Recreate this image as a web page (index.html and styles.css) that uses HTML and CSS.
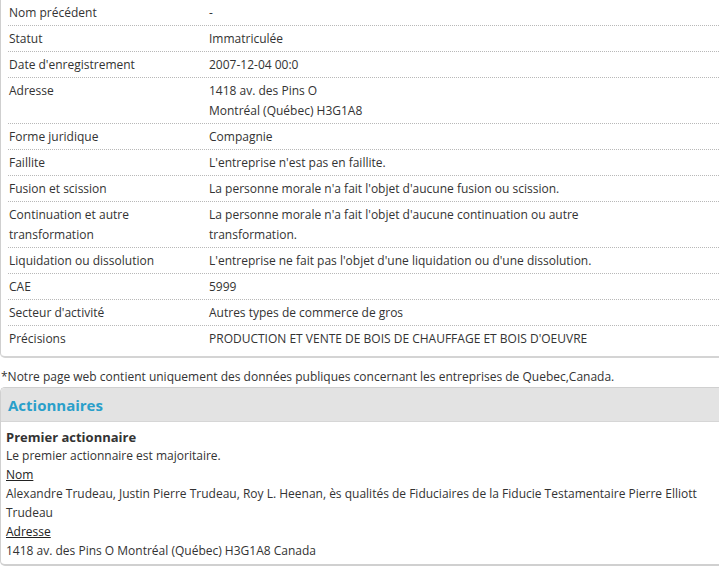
FILE: index.html
```html
<!DOCTYPE html>
<html lang="fr">
<head>
<meta charset="utf-8">
<title>Fiche entreprise</title>
<link rel="stylesheet" href="styles.css">
</head>
<body>
<div class="panel">
  <div class="row"><div class="label">Nom précédent</div><div class="value">-</div></div>
  <div class="row"><div class="label">Statut</div><div class="value">Immatriculée</div></div>
  <div class="row"><div class="label">Date d'enregistrement</div><div class="value">2007-12-04 00:0</div></div>
  <div class="row"><div class="label">Adresse</div><div class="value">1418 av. des Pins O<br>Montréal (Québec) H3G1A8</div></div>
  <div class="row"><div class="label">Forme juridique</div><div class="value">Compagnie</div></div>
  <div class="row"><div class="label">Faillite</div><div class="value">L'entreprise n'est pas en faillite.</div></div>
  <div class="row"><div class="label">Fusion et scission</div><div class="value">La personne morale n'a fait l'objet d'aucune fusion ou scission.</div></div>
  <div class="row"><div class="label">Continuation et autre transformation</div><div class="value">La personne morale n'a fait l'objet d'aucune continuation ou autre<br>transformation.</div></div>
  <div class="row"><div class="label">Liquidation ou dissolution</div><div class="value">L'entreprise ne fait pas l'objet d'une liquidation ou d'une dissolution.</div></div>
  <div class="row"><div class="label">CAE</div><div class="value">5999</div></div>
  <div class="row"><div class="label">Secteur d'activité</div><div class="value">Autres types de commerce de gros</div></div>
  <div class="row last"><div class="label">Précisions</div><div class="value">PRODUCTION ET VENTE DE BOIS DE CHAUFFAGE ET BOIS D'OEUVRE</div></div>
</div>
<p class="note">*Notre page web contient uniquement des données publiques concernant les entreprises de Quebec,Canada.</p>
<div class="box">
  <div class="box-head"><h2 class="box-title">Actionnaires</h2></div>
  <div class="box-body">
    <h3 class="sub">Premier actionnaire</h3>
    <p class="line">Le premier actionnaire est majoritaire.</p>
    <p class="line field">Nom</p>
    <p class="line">Alexandre Trudeau, Justin Pierre Trudeau, Roy L. Heenan, ès qualités de Fiduciaires de la Fiducie Testamentaire Pierre Elliott Trudeau</p>
    <p class="line field">Adresse</p>
    <p class="line">1418 av. des Pins O Montréal (Québec) H3G1A8 Canada</p>
  </div>
</div>
</body>
</html>
```
FILE: styles.css
```css
html, body {
  margin: 0;
  padding: 0;
  background: #fff;
  overflow: hidden;
}
body {
  font-family: "Open Sans", "DejaVu Sans", sans-serif;
  font-size: 12px;
  color: #333;
}
.panel {
  border-left: 1px solid #cfcfcf;
  border-bottom: 2px solid #d4d4d4;
  border-bottom-left-radius: 5px;
  padding: 0 0 5px 7px;
}
.row {
  display: flex;
  border-bottom: 1px dotted #b8b8b8;
  padding: 3px 0 2px;
  line-height: 20px;
}
.row.last {
  border-bottom: none;
}
.label {
  width: 200px;
  padding-left: 1px;
  flex-shrink: 0;
  padding-right: 10px;
  box-sizing: border-box;
}
.value {
  flex: 1;
  padding-left: 1px;
}
.note {
  margin: 9px 0 0 0;
  line-height: 20px;
  padding-left: 1px;
}
.box {
  border: 1px solid #d0d0d0;
  border-right: none;
  border-bottom-width: 2px;
  border-radius: 5px 0 0 5px;
  overflow: hidden;
}
.box-head {
  background: #e3e3e3;
  height: 33px;
  border-bottom: 1px solid #d6d6d6;
  display: flex;
  align-items: center;
  padding-left: 7px;
}
.box-title {
  margin: 0;
  font-size: 15px;
  font-weight: 700;
  color: #2a9fca;
}
.box-body {
  padding: 6px 5px 4px;
}
.sub {
  margin: 0;
  font-size: 13px;
  font-weight: 700;
  line-height: 18px;
  color: #333;
}
.line {
  margin: 0;
  line-height: 19px;
}
.field {
  text-decoration: underline;
  color: #222;
}
```
